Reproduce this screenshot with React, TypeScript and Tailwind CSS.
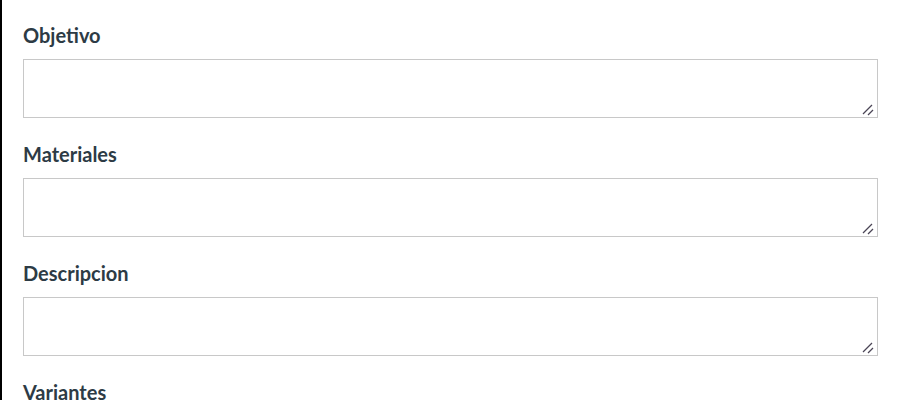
import React from "react";

const fields = ["Objetivo", "Materiales", "Descripcion"];

function Grip() {
  return (
    <svg
      className="pointer-events-none absolute bottom-0 right-0"
      width="18"
      height="18"
      viewBox="0 0 18 18"
    >
      <line x1="3" y1="14" x2="12" y2="5" stroke="#4b4556" strokeWidth="1.3" />
      <line x1="8" y1="15" x2="13" y2="10" stroke="#4b4556" strokeWidth="1.3" />
    </svg>
  );
}

export default function App() {
  return (
    <div
      className="h-[400px] overflow-hidden border-l-2 border-black bg-white pl-[21px] pr-[23px] pt-[23px] text-[#2d3b45]"
      style={{ fontFamily: "Lato, 'Open Sans', sans-serif" }}
    >
      {fields.map((f) => (
        <div key={f} className="mb-[24px]">
          <label className="mb-[12px] block text-[20px] font-bold leading-[24px]">
            {f}
          </label>
          <div className="relative">
            <textarea className="block h-[59px] w-full resize-none border border-[#c8c8c8] bg-white px-2 py-1 text-base outline-none" />
            <Grip />
          </div>
        </div>
      ))}
      <label className="block text-[20px] font-bold leading-[24px]">Variantes</label>
    </div>
  );
}
